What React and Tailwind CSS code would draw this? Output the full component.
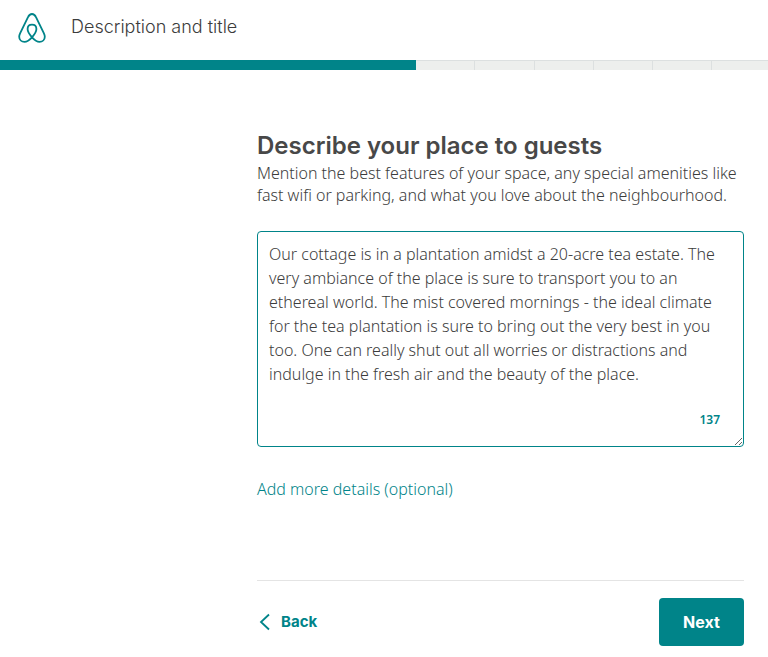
import { useState } from 'react';

const remainingSteps = ['Title', 'Photos', 'Pricing', 'Calendar', 'Rules'];

const initialDescription =
  'Our cottage is in a plantation amidst a 20-acre tea estate. The very ambiance of the place is sure to transport you to an ethereal world. The mist covered mornings - the ideal climate for the tea plantation is sure to bring out the very best in you too. One can really shut out all worries or distractions and indulge in the fresh air and the beauty of the place.';

const MAX_LENGTH = 500;

function Logo() {
  return (
    <svg
      width="28"
      height="30"
      viewBox="0 0 28 30"
      fill="none"
      stroke="currentColor"
      strokeWidth="1.8"
      strokeLinejoin="round"
      aria-hidden="true"
    >
      <path d="M14 24.3C11.2 21 9.6 18.4 9.6 15.9C9.6 13.4 11.4 11.6 14 11.6C16.6 11.6 18.4 13.4 18.4 15.9C18.4 18.4 16.8 21 14 24.3C11.2 27.4 9 28.8 6.5 28.8C3.5 28.8 1.2 26.6 1.2 23.7C1.2 22.5 1.5 21.6 2.2 20.1L10 4.2C11 2 12.1 1 14 1C15.9 1 17 2 18 4.2L25.8 20.1C26.5 21.6 26.8 22.5 26.8 23.7C26.8 26.6 24.5 28.8 21.5 28.8C19 28.8 16.8 27.4 14 24.3Z" />
    </svg>
  );
}

export default function App() {
  const [description, setDescription] = useState(initialDescription);

  return (
    <div className="min-h-screen bg-white font-['Noto_Sans',sans-serif] font-light text-[#3c3c3c]">
      <header className="flex h-[60px] items-center pl-[18px] pb-1">
        <a href="#home" aria-label="Home" className="text-[#008489]">
          <Logo />
        </a>
        <p className="ml-[25px] pb-[2px] font-['Inter',sans-serif] text-[18px] leading-6">Description and title</p>
      </header>

      {/* Progress */}
      <div className="flex h-[10px] bg-[#edefed]">
        <div className="w-[54.2%] bg-[#008489]" />
        {remainingSteps.map((step) => (
          <div key={step} className="w-[7.7%] border-t border-r border-[#dce0e0]" />
        ))}
        <div className="flex-1 border-t border-[#dce0e0]" />
      </div>

      <main className="ml-[257px] mr-6 pt-[60px]">
        <h1 className="font-['Inter',sans-serif] text-[24px] leading-8 font-semibold text-[#484848]">
          Describe your place to guests
        </h1>
        <label htmlFor="description" className="block text-[16px] leading-[22px]">
          Mention the best features of your space, any special amenities like fast wifi or parking, and what you love
          about the neighbourhood.
        </label>

        <div className="relative mt-[25px]">
          <textarea
            id="description"
            value={description}
            maxLength={MAX_LENGTH}
            onChange={(e) => setDescription(e.target.value)}
            className="block h-[216px] w-full rounded-[4px] border border-[#008489] px-[11px] pt-[10px] pb-12 text-[16px] leading-6 outline-none"
          />
          <span className="absolute right-6 bottom-[18px] text-[12px] leading-[18px] font-semibold text-[#008489]">
            {MAX_LENGTH - description.length}
          </span>
        </div>

        <a href="#details" className="mt-[30px] inline-block text-[16px] leading-6 text-[#008489]">
          Add more details (optional)
        </a>

        <div className="mt-[79px] flex items-center justify-between border-t border-[#e4e4e4] pt-[17px] font-['Inter',sans-serif]">
          <button type="button" className="flex items-center gap-[10px] pl-[2px] text-[15px] font-bold text-[#008489]">
            <svg width="12" height="18" viewBox="0 0 12 18" fill="none" stroke="currentColor" strokeWidth="1.8" aria-hidden="true">
              <path d="M10 1.5L2 9L10 16.5" />
            </svg>
            Back
          </button>
          <button type="button" className="h-12 w-[85px] rounded-[4px] bg-[#008489] text-[16px] font-bold text-white">
            Next
          </button>
        </div>
      </main>
    </div>
  );
}
